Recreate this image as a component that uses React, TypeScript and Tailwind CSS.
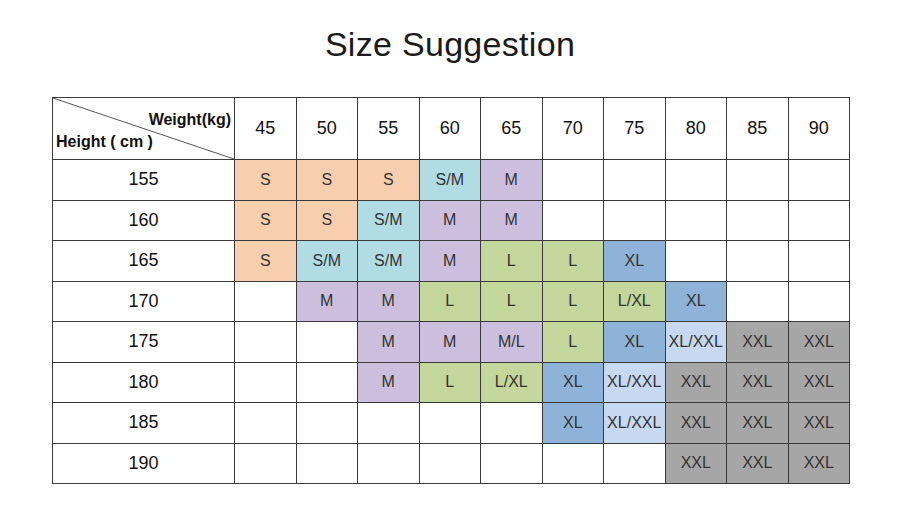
const weights = [45, 50, 55, 60, 65, 70, 75, 80, 85, 90];

const colors: Record<string, string> = {
  S: "bg-[#f8cfae]",
  "S/M": "bg-[#b1dce3]",
  M: "bg-[#cbbfdd]",
  "M/L": "bg-[#cbbfdd]",
  L: "bg-[#c3d69b]",
  "L/XL": "bg-[#c3d69b]",
  XL: "bg-[#8fb2d8]",
  "XL/XXL": "bg-[#c6d9f0]",
  XXL: "bg-[#a6a6a6]",
};

const rows: { h: number; sizes: string[] }[] = [
  { h: 155, sizes: ["S", "S", "S", "S/M", "M", "", "", "", "", ""] },
  { h: 160, sizes: ["S", "S", "S/M", "M", "M", "", "", "", "", ""] },
  { h: 165, sizes: ["S", "S/M", "S/M", "M", "L", "L", "XL", "", "", ""] },
  { h: 170, sizes: ["", "M", "M", "L", "L", "L", "L/XL", "XL", "", ""] },
  { h: 175, sizes: ["", "", "M", "M", "M/L", "L", "XL", "XL/XXL", "XXL", "XXL"] },
  { h: 180, sizes: ["", "", "M", "L", "L/XL", "XL", "XL/XXL", "XXL", "XXL", "XXL"] },
  { h: 185, sizes: ["", "", "", "", "", "XL", "XL/XXL", "XXL", "XXL", "XXL"] },
  { h: 190, sizes: ["", "", "", "", "", "", "", "XXL", "XXL", "XXL"] },
];

export default function App() {
  return (
    <div className="w-[900px] h-[528px] bg-white font-['Liberation_Sans',Arial,sans-serif] text-[#222]">
      <h1 className="text-center text-[34px] font-light tracking-[0.3px] pt-[22px] leading-[44px] text-[#1a1a1a]">
        Size Suggestion
      </h1>
      <table className="ml-[52px] mt-[31px] border-collapse table-fixed w-[797px]">
        <colgroup>
          <col className="w-[182px]" />
          {weights.map((w) => (
            <col key={w} className="w-[61.5px]" />
          ))}
        </colgroup>
        <thead>
          <tr className="h-[62px]">
            <th className="relative border border-[#3a3a3a] p-0 font-bold text-[16px] text-[#111]">
              <svg className="absolute inset-0 w-full h-full" preserveAspectRatio="none" viewBox="0 0 100 100">
                <line x1="0" y1="0" x2="100" y2="100" stroke="#555" strokeWidth="1" vectorEffect="non-scaling-stroke" />
              </svg>
              <span className="absolute right-[3px] top-[10px]">Weight(kg)</span>
              <span className="absolute left-[3px] top-[32px]">Height ( cm )</span>
            </th>
            {weights.map((w) => (
              <th key={w} className="border border-[#3a3a3a] font-normal text-[18px] text-center text-[#111]">
                {w}
              </th>
            ))}
          </tr>
        </thead>
        <tbody>
          {rows.map((r) => (
            <tr key={r.h} className="h-[40.5px]">
              <td className="border border-[#3a3a3a] text-center text-[18px] text-[#111]">{r.h}</td>
              {r.sizes.map((s, i) => (
                <td
                  key={i}
                  className={`border border-[#3a3a3a] text-center text-[16px] text-[#333] whitespace-nowrap ${s ? colors[s] : ""}`}
                >
                  {s}
                </td>
              ))}
            </tr>
          ))}
        </tbody>
      </table>
    </div>
  );
}
